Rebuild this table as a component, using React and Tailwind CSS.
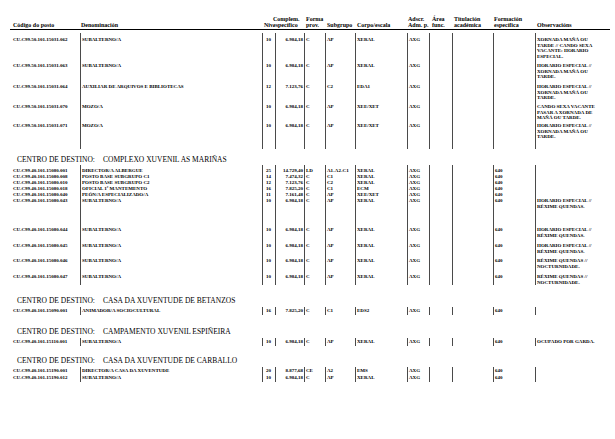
import React from "react";

const COLS = "grid grid-cols-[67px_182px_13px_29px_21px_30px_52px_22px_23px_41px_42px_75px] ml-[13px]";
const L = "border-l border-[#4a4a4a]";

function Row({ r, h }) {
  return (
    <div className={COLS + " text-[5px] leading-[5.5px] font-bold"} style={{ height: h }}>
      <div className="whitespace-nowrap pt-[1px]">{r.code}</div>
      <div className={L + " pl-[1px] whitespace-nowrap pt-[1px]"}>{r.den}</div>
      <div className={L + " pl-[3px] pt-[1px]"}>{r.niv}</div>
      <div className={L + " pr-[1px] text-right pt-[1px]"}>{r.comp}</div>
      <div className={L + " pl-[1px] pt-[1px]"}>{r.forma}</div>
      <div className={L + " pl-[1px] pt-[1px]"}>{r.sub}</div>
      <div className={L + " pl-[1px] pt-[1px]"}>{r.corpo}</div>
      <div className={L + " pl-[1px] pt-[1px]"}>AXG</div>
      <div className={L}></div>
      <div className={L}></div>
      <div className={L + " pl-[1px] pt-[1px]"}>{r.form}</div>
      <div className={L + " pl-[1px] pt-[1px] whitespace-nowrap"}>
        {(r.obs || []).map((o, i) => (
          <div key={i}>{o}</div>
        ))}
      </div>
    </div>
  );
}

function Spacer({ h }) {
  return (
    <div className={COLS} style={{ height: h }}>
      <div></div>
      <div className={L}></div>
      <div className={L}></div>
      <div className={L}></div>
      <div className={L}></div>
      <div className={L}></div>
      <div className={L}></div>
      <div className={L}></div>
      <div className={L}></div>
      <div className={L}></div>
      <div className={L}></div>
      <div className={L}></div>
    </div>
  );
}

function Title({ name }) {
  return (
    <div className="flex ml-[17px] text-[7.5px] leading-[8px] whitespace-nowrap">
      <span className="w-[86px]">CENTRO DE DESTINO:</span>
      <span>{name}</span>
    </div>
  );
}

const sub = (code, obs, form = "") => ({
  code,
  den: "SUBALTERNO/A",
  niv: "10",
  comp: "6.984,18",
  forma: "C",
  sub: "AP",
  corpo: "XERAL",
  form,
  obs,
});

const s1 = [
  [sub("CU.C99.50.101.15031.062", ["XORNADA MAÑÁ OU", "TARDE // CANDO SEXA", "VACANTE: HORARIO", "ESPECIAL."]), 26],
  [sub("CU.C99.50.101.15031.063", ["HORARIO ESPECIAL //", "XORNADA MAÑÁ OU", "TARDE."]), 21],
  [{ code: "CU.C99.50.101.15031.064", den: "AUXILIAR DE ARQUIVOS E BIBLIOTECAS", niv: "12", comp: "7.123,76", forma: "C", sub: "C2", corpo: "EDA1", obs: ["HORARIO ESPECIAL //", "XORNADA MAÑÁ OU", "TARDE."] }, 20],
  [{ code: "CU.C99.50.101.15031.070", den: "MOZO/A", niv: "10", comp: "6.984,18", forma: "C", sub: "AP", corpo: "XEE/XET", obs: ["CANDO SEXA VACANTE", "PASAR A XORNADA DE", "MAÑÁ OU TARDE."] }, 19],
  [{ code: "CU.C99.50.101.15031.071", den: "MOZO/A", niv: "10", comp: "6.984,18", forma: "C", sub: "AP", corpo: "XEE/XET", obs: ["HORARIO ESPECIAL //", "XORNADA MAÑÁ OU", "TARDE."] }, 27],
];

const s2 = [
  [{ code: "CU.C99.40.101.15080.001", den: "DIRECTOR/A ALBERGUE", niv: "25", comp: "14.729,40", forma: "LD", sub: "A1-A2-C1", corpo: "XERAL", form: "640" }, 6],
  [{ code: "CU.C99.40.101.15080.008", den: "POSTO BASE SUBGRUPO C1", niv: "14", comp: "7.474,32", forma: "C", sub: "C1", corpo: "XERAL", form: "640" }, 6],
  [{ code: "CU.C99.40.101.15080.010", den: "POSTO BASE SUBGRUPO C2", niv: "12", comp: "7.123,76", forma: "C", sub: "C2", corpo: "XERAL", form: "640" }, 6],
  [{ code: "CU.C99.40.101.15080.018", den: "OFICIAL 1ª MANTEMENTO", niv: "16", comp: "7.825,20", forma: "C", sub: "C1", corpo: "ECM", form: "640" }, 6],
  [{ code: "CU.C99.40.101.15080.040", den: "PEÓN/A ESPECIALIZADO/A", niv: "11", comp: "7.161,48", forma: "C", sub: "AP", corpo: "XEE/XET", form: "640" }, 6],
  [sub("CU.C99.40.101.15080.043", ["HORARIO ESPECIAL //", "RÉXIME QUENDAS."], "640"), 29],
  [sub("CU.C99.40.101.15080.044", ["HORARIO ESPECIAL //", "RÉXIME QUENDAS."], "640"), 16],
  [sub("CU.C99.40.101.15080.045", ["HORARIO ESPECIAL //", "RÉXIME QUENDAS."], "640"), 15],
  [sub("CU.C99.40.101.15080.046", ["RÉXIME QUENDAS //", "NOCTURNIDADE."], "640"), 16],
  [sub("CU.C99.40.101.15080.047", ["RÉXIME QUENDAS //", "NOCTURNIDADE."], "640"), 12],
];

export default function App() {
  return (
    <div className="w-[615px] h-[439px] bg-white overflow-hidden text-black font-['Liberation_Serif',serif]">
      <div className="pt-[16px]">
        <div className={COLS + " text-[6px] leading-[6px] font-bold whitespace-nowrap"}>
          <div className="pt-[6px]">Código do posto</div>
          <div className="pt-[6px] pl-[1px]">Denominación</div>
          <div className="pt-[6px] pl-[2px]">Niv.</div>
          <div className="-ml-[2px]"><div>Complem.</div><div>específico</div></div>
          <div className="pl-[2px]"><div>Forma</div><div>prov.</div></div>
          <div className="pt-[6px] pl-[2px]">Subgrupo</div>
          <div className="pt-[6px] pl-[2px]">Corpo/escala</div>
          <div className="pl-[1px]"><div>Adscr.</div><div>Adm. p.</div></div>
          <div className="pl-[3px]"><div>Área</div><div>func.</div></div>
          <div className="pl-[2px]"><div>Titulación</div><div>académica</div></div>
          <div className="pl-[1px]"><div>Formación</div><div>específica</div></div>
          <div className="pt-[6px] pl-[2px]">Observacións</div>
        </div>
        <div className="ml-[10px] mr-[5px] h-[1px] bg-black mt-[1px]"></div>
      </div>

      <div className="mt-[3px]">
        <Spacer h={3} />
        {s1.map(([r, h], i) => (
          <Row key={i} r={r} h={h} />
        ))}
      </div>

      <div className="pt-[7px] pb-[1px]">
        <Title name="COMPLEXO XUVENIL AS MARIÑAS" />
      </div>
      <div>
        <Spacer h={2} />
        {s2.map(([r, h], i) => (
          <Row key={i} r={r} h={h} />
        ))}
      </div>

      <div className="pt-[12px] pb-[2px]">
        <Title name="CASA DA XUVENTUDE DE BETANZOS" />
      </div>
      <Row r={{ code: "CU.C99.40.101.15090.001", den: "ANIMADOR/A SOCIOCULTURAL", niv: "16", comp: "7.825,20", forma: "C", sub: "C1", corpo: "EDS2", form: "640" }} h={8} />

      <div className="pt-[13px] pb-[2px]">
        <Title name="CAMPAMENTO XUVENIL ESPIÑEIRA" />
      </div>
      <Row r={sub("CU.C99.40.101.15110.001", ["OCUPADO POR GARDA."], "640")} h={8} />

      <div className="pt-[11px] pb-[2px]">
        <Title name="CASA DA XUVENTUDE DE CARBALLO" />
      </div>
      <Row r={{ code: "CU.C99.40.101.15190.001", den: "DIRECTOR/A CASA DA XUVENTUDE", niv: "20", comp: "8.877,68", forma: "CE", sub: "A2", corpo: "EMS", form: "640" }} h={7} />
      <Row r={sub("CU.C99.40.101.15190.012", [], "640")} h={8} />
    </div>
  );
}
